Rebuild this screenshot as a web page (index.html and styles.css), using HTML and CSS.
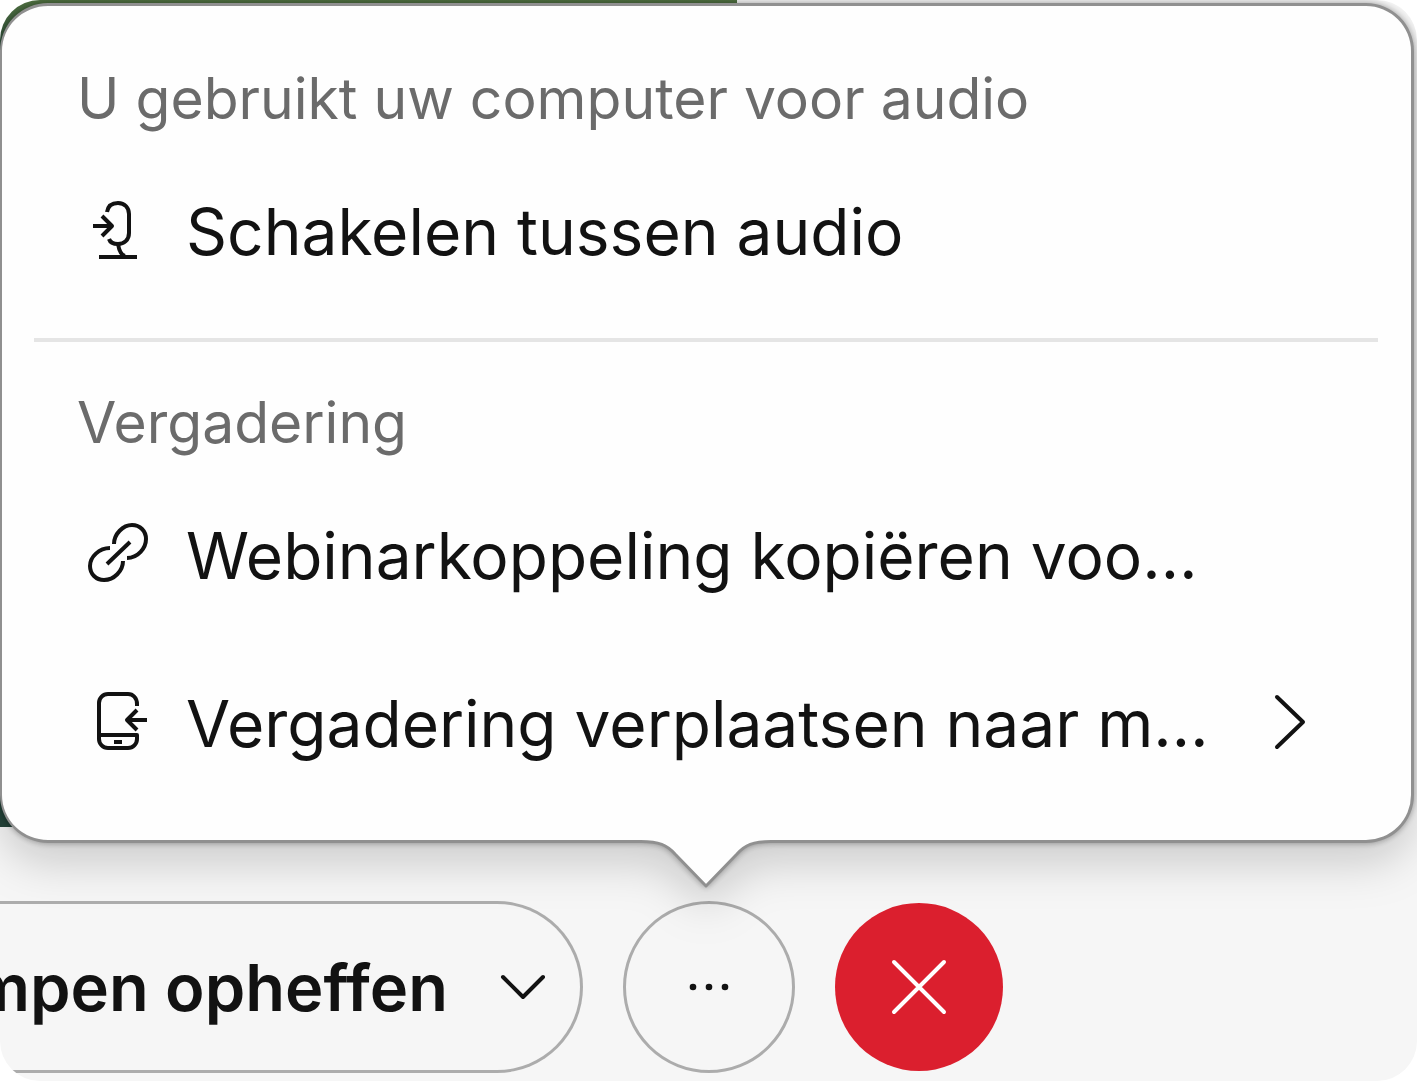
FILE: index.html
```html
<!DOCTYPE html>
<html lang="nl">
<head>
    <meta charset="UTF-8">
    <meta name="viewport" content="width=device-width, initial-scale=1.0">
    <title>Vergadering</title>
    <link rel="stylesheet" href="styles.css">
</head>
<body>

    <div class="window">
        <div class="video"></div>

        <div class="popover">
            <h2>U gebruikt uw computer voor audio</h2>
            <button type="button" class="item">
                <svg class="icon" viewBox="0 7 64 64">
                    <path d="M21 20C22 14 26 11 32 11C39 11 43 16 43 22V41C43 48 38 52 32 52C27 52 24 50 23 47"/>
                    <path d="M7 34H25M16 24L26 34L16 44M32 52C33 58 35 63 39 64M13 65H51"/>
                </svg>
                <span>Schakelen tussen audio</span>
            </button>

            <hr>

            <h2>Vergadering</h2>
            <button type="button" class="item">
                <svg class="icon" viewBox="0 3 64 64">
                    <path d="M28 24C28 14 37 5 46 5C54 5 60 11 60 19C60 28 52 38 41 38"/>
                    <path d="M24 28C13 28 4 37 4 46C4 54 10 60 18 60C28 60 37 51 37 41M21 44L44 22"/>
                </svg>
                <span>Webinarkoppeling kopiëren voo…</span>
            </button>
            <button type="button" class="item">
                <svg class="icon" viewBox="0 2 64 64">
                    <path d="M51 17V15C51 9 47 5 42 5H22C17 5 13 9 13 14V50C13 55 17 59 22 59H42C47 59 51 55 51 50V46H13"/>
                    <path d="M61 31H42M51 21L41 31L51 41M28 53H36"/>
                </svg>
                <span>Vergadering verplaatsen naar m…</span>
                <svg class="chevron" viewBox="0 0 36 60">
                    <path d="M5 4L31 29L5 54"/>
                </svg>
            </button>

            <svg class="tail" viewBox="0 0 130 50">
                <path class="tail-fill" d="M0 0H130V2.5C112 2.5 104 6 96 15L65 47L34 15C26 6 18 2.5 0 2.5Z"/>
                <path class="tail-line" d="M0 2.5C18 2.5 26 6 34 15L65 47L96 15C104 6 112 2.5 130 2.5"/>
            </svg>
        </div>

        <div class="controls">
            <button type="button" class="mute">
                <span>mpen opheffen</span>
                <svg viewBox="0 0 48 30">
                    <path d="M4 5L24 25L44 5"/>
                </svg>
            </button>
            <button type="button" class="round more" aria-label="Meer opties">
                <svg viewBox="0 0 48 12">
                    <circle cx="8" cy="6" r="3.3"/>
                    <circle cx="24" cy="6" r="3.3"/>
                    <circle cx="40" cy="6" r="3.3"/>
                </svg>
            </button>
            <button type="button" class="round leave" aria-label="Verlaten">
                <svg viewBox="0 0 56 56">
                    <path d="M3 3L53 53M53 3L3 53"/>
                </svg>
            </button>
        </div>
    </div>

</body>
</html>
```
FILE: styles.css
```css
* {
    box-sizing: border-box;
}
body {
    margin: 0;
    background: #fff;
    font-family: Inter, 'Liberation Sans', sans-serif;
    color: #121212;
}
button {
    font-family: inherit;
    color: inherit;
    padding: 0;
    cursor: pointer;
}
svg {
    flex: none;
    fill: none;
    stroke: #121212;
    stroke-width: 4;
    stroke-linecap: round;
    stroke-linejoin: round;
}
.window {
    position: relative;
    min-height: 100vh;
    padding: 3px 3px 0 0;
    border-radius: 40px;
    overflow: hidden;
    background: #f6f6f6;
}
.video {
    position: absolute;
    top: 0;
    left: 0;
    width: 52%;
    height: 827px;
    background: linear-gradient(#4f7040, #24443a 60px, #24443a);
}
.popover {
    position: relative;
    padding: 45px 33px 33px 32px;
    background: #fefefe;
    border: 3px solid #909090;
    border-left-width: 2px;
    border-radius: 48px;
    filter: drop-shadow(0 0 3px rgba(0, 0, 0, 0.35)) drop-shadow(0 20px 22px rgba(0, 0, 0, 0.17));
}
h2 {
    margin: 0 43px;
    font-size: 57px;
    line-height: 96px;
    font-weight: 400;
    color: #6b6b6b;
}
.item {
    display: flex;
    align-items: center;
    width: 100%;
    height: 168px;
    padding: 0 70px 0 52px;
    border: none;
    background: none;
    font-size: 64px;
    text-align: left;
    white-space: nowrap;
}
.icon {
    width: 64px;
    height: 64px;
    margin-right: 36px;
    overflow: visible;
    stroke-linecap: butt;
}
.chevron {
    width: 36px;
    height: 60px;
    margin-left: auto;
}
hr {
    height: 4px;
    margin: 23px 0 33px;
    border: none;
    background: #e5e5e5;
}
.tail {
    position: absolute;
    top: calc(100% - 1px);
    left: 50%;
    width: 130px;
    height: 50px;
    margin-left: -66px;
}
.tail-fill {
    fill: #fefefe;
    stroke: none;
}
.tail-line {
    stroke: #909090;
    stroke-width: 3;
}
.controls {
    display: flex;
    align-items: center;
    gap: 40px;
    padding-top: 58px;
}
.mute {
    position: relative;
    display: flex;
    align-items: center;
    justify-content: flex-end;
    gap: 51px;
    width: 623px;
    height: 172px;
    margin-left: -40px;
    padding-right: 33px;
    border: 3px solid #acacac;
    border-radius: 86px;
    border-left: none;
    border-top-left-radius: 0;
    border-bottom-left-radius: 0;
    background: none;
    font-size: 65px;
    font-weight: 600;
    white-space: nowrap;
}
.mute svg {
    width: 48px;
    height: 30px;
}
.round {
    display: flex;
    align-items: center;
    justify-content: center;
    width: 172px;
    height: 172px;
    border: 3px solid #acacac;
    border-radius: 50%;
    background: none;
}
.more svg {
    width: 48px;
    height: 12px;
    fill: #121212;
    stroke: none;
}
.leave {
    width: 168px;
    height: 168px;
    border: none;
    background: #db1f2e;
}
.leave svg {
    width: 56px;
    height: 56px;
    stroke: #fff;
}
```
